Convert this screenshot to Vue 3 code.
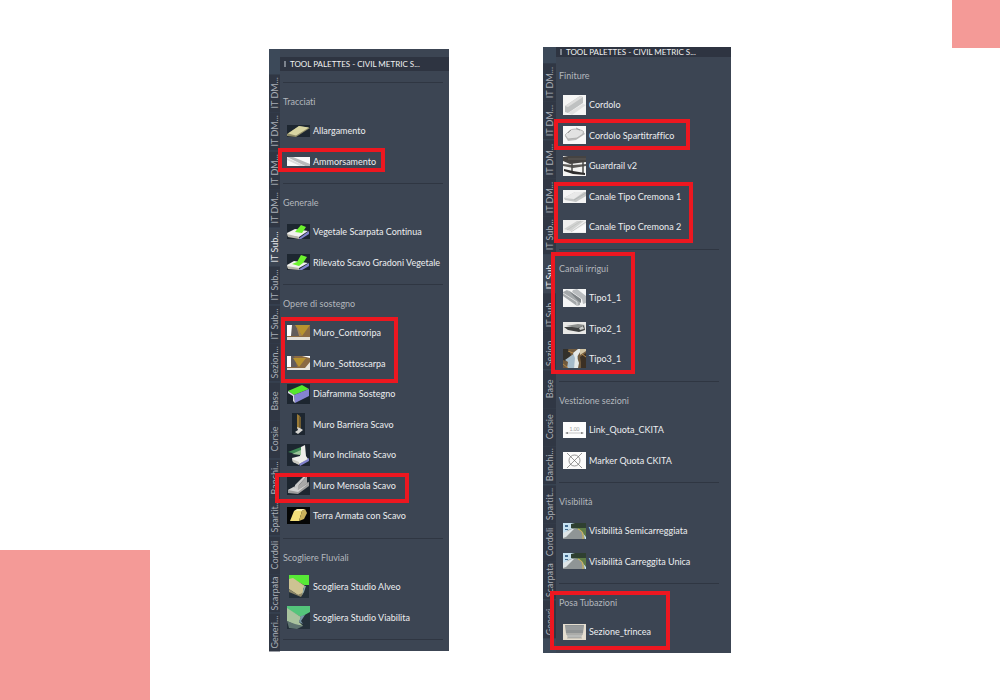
<template>
  <main class="slide">
    <div class="accent accent-top"></div>
    <div class="accent accent-bottom"></div>

    <section v-for="panel in panels" :key="panel.id" class="palette" :class="'palette-' + panel.id">
      <nav class="tabs" aria-label="Tool palettes">
        <button
          v-for="(tab, i) in tabs"
          :key="i"
          type="button"
          class="tab"
          :class="{ active: i === panel.activeTab }"
        >{{ tab }}</button>
      </nav>

      <div class="content">
        <header class="title-bar">
          <span class="grip"></span>
          <h2 class="title">TOOL PALETTES - CIVIL METRIC S...</h2>
        </header>

        <div class="groups">
          <div v-for="group in panel.groups" :key="group.name" class="group">
            <h3 class="group-name">{{ group.name }}</h3>
            <ul class="items">
              <li v-for="item in group.items" :key="item.label">
                <button type="button" class="item">
                  <span class="icon-cell">
                    <svg
                      :width="icons[item.icon].w || 23"
                      :height="icons[item.icon].h"
                      :viewBox="`0 0 ${icons[item.icon].w || 23} ${icons[item.icon].h}`"
                      aria-hidden="true"
                    >
                      <rect width="23" height="23" :fill="icons[item.icon].bg" />
                      <path
                        v-for="(p, n) in icons[item.icon].paths"
                        :key="n"
                        :d="p[1]"
                        :fill="p[0]"
                        :stroke="p[2] || 'none'"
                        :stroke-width="p[3] || 1"
                      />
                      <text v-if="icons[item.icon].text" x="11.5" y="8.5" class="icon-text">{{ icons[item.icon].text }}</text>
                    </svg>
                  </span>
                  <span class="item-label">{{ item.label }}</span>
                </button>
              </li>
            </ul>
          </div>
        </div>
      </div>

      <span
        v-for="(m, i) in panel.marks"
        :key="i"
        class="mark"
        :style="{ left: m.x + 'px', top: m.y + 'px', width: m.w + 'px', height: m.h + 'px' }"
      ></span>
    </section>
  </main>
</template>

<script setup>
const tabs = [
  'IT DM...', 'IT DM...', 'IT DM...', 'IT DM...', 'IT Sub...', 'IT Sub...', 'IT Sub...',
  'Sezion...', 'Base', 'Corsie', 'Banchi...', 'Spartit...', 'Cordoli', 'Scarpata', 'Generi...'
];

const dark = '#1d2630';

// paths: [fill, d, stroke, stroke width]
const icons = {
  allargamento: { h: 12, bg: dark, paths: [
    ['#8f8c68', 'M0 9 L12 1 L23 3 L9 12 L0 11Z'],
    ['#d8d5a2', 'M1 8.5 L12 1 L22 2.5 L9 10.5Z']
  ] },
  ammorsamento: { h: 9, bg: '#fafafa', paths: [
    ['#b9babb', 'M0 0 L6 0 L23 7 L23 9 L18 9Z'],
    ['#dcdcdc', 'M0 1 L18 9 L13 9 L0 3Z']
  ] },
  vegetale: { h: 15, bg: dark, paths: [
    ['#8385cf', 'M11 15 L22 7 L22 10 L14 15Z'],
    ['#f1f1ee', 'M0 9 L8 5 L21 7 L12 13 L1 12Z'],
    ['#b7b5aa', 'M0 10 L12 13 L12 15 L1 13Z'],
    ['#6df22f', 'M8 8 L14 1 L19 3 L15 9Z']
  ] },
  rilevato: { h: 16, bg: dark, paths: [
    ['#8385cf', 'M11 16 L22 9 L22 12 L15 16Z'],
    ['#f1f1ee', 'M0 11 L7 7 L21 9 L12 14 L1 14Z'],
    ['#b7b5aa', 'M0 12 L12 14 L12 16 L1 15Z'],
    ['#6df22f', 'M5 10 L10 8 L14 1 L20 3 L16 9 L12 12Z']
  ] },
  controripa: { h: 15, bg: '#8b6a43', paths: [
    ['#ffffff', 'M0 0 L6 0 L5 11 L0 11Z'],
    ['#625c5b', 'M5 0 L9 0 L13 11 L4 11Z'],
    ['#b8932f', 'M8 0 L23 0 L15 11Z'],
    ['#a58353', 'M9 0 L15 11 L12 11Z'],
    ['#e3dfd8', 'M0 12 L23 12 L23 15 L0 15Z']
  ] },
  sottoscarpa: { h: 14, bg: '#8b6a43', paths: [
    ['#ffffff', 'M0 0 L4 0 L4 11 L0 11Z'],
    ['#625c5b', 'M4 0 L7 0 L10 11 L4 11Z'],
    ['#b8932f', 'M6 2 L19 2 L12 11Z'],
    ['#ffffff', 'M15 0 L23 0 L23 2Z'],
    ['#e8e4dd', 'M23 6 L23 14 L0 14 L0 12 L18 12Z']
  ] },
  diaframma: { h: 20, bg: dark, paths: [
    ['#56e62c', 'M1 7 L15 1 L22 5 L7 11Z'],
    ['#8583d2', 'M7 11 L22 5 L22 12 L8 19Z'],
    ['#dcdce4', 'M1 7 L7 11 L8 19 L6 17 L6 12 L1 9Z']
  ] },
  barriera: { w: 13, h: 22, bg: dark, paths: [
    ['#9a7a35', 'M5 1 L8 3 L8 15 L5 16Z'],
    ['#6e5b32', 'M7 3 L9 4 L9 15 L7 15Z'],
    ['#d5d4d0', 'M5 14 L8 15 L11 17 L6 21 L3 19 L6 17Z']
  ] },
  inclinato: { h: 22, bg: dark, paths: [
    ['#8181cd', 'M12 20 L22 14 L22 17 L13 22Z'],
    ['#eeeeea', 'M14 3 L18 1 L19 12 L21 15 L12 20 L6 18 L5 14 L13 12Z'],
    ['#3f8955', 'M1 8 L14 3 L14 11Z'],
    ['#9bc599', 'M5 10 L14 6 L14 11Z'],
    ['#c9c8c0', 'M5 15 L12 18 L12 21 L6 18Z']
  ] },
  mensola: { h: 20, bg: dark, paths: [
    ['#9c9c9c', 'M1 15 L8 11 L22 7 L22 11 L11 19 L1 18Z'],
    ['#c9c9c9', 'M8 10 L17 1 L20 1 L11 11 L11 15 L8 14Z'],
    ['#a8a8a8', 'M11 11 L20 1 L20 8 L11 15Z'],
    ['#d2d2d2', 'M1 15 L7 12 L11 15 L22 8 L11 17Z']
  ] },
  terra: { h: 17, bg: '#050606', paths: [
    ['#f3df7a', 'M7 4 L15 4 L12 14 L3 14Z'],
    ['#fbf1ae', 'M7 4 L10 2 L18 2 L15 4Z'],
    ['#c9b25c', 'M15 4 L18 2 L20 6 L17 12 L12 14Z']
  ] },
  alveo: { w: 20, h: 23, bg: '#24303a', paths: [
    ['#57e936', 'M0 0 L20 0 L20 10 L15 10 L4 4 L0 5Z'],
    ['#cdc392', 'M0 4 L4 3 L16 11 L14 14 L14 19 L9 20 L0 14Z'],
    ['#8d8868', 'M0 14 L9 20 L15 17 L12 22 L0 17Z'],
    ['#8ca8a6', 'M15 11 L17 11 L15 17 L13 20Z']
  ] },
  viabilita: { h: 23, bg: '#24303a', paths: [
    ['#54c57b', 'M0 0 L23 0 L23 6 L14 11 L0 3Z'],
    ['#a9c39e', 'M0 2 L14 11 L12 16 L16 20 L8 19 L0 15Z'],
    ['#5e7470', 'M0 15 L8 18 L16 20 L10 23 L2 22Z'],
    ['#7796a5', 'M14 10 L18 9 L14 15 L16 18 L12 16Z']
  ] },
  cordolo: { h: 20, bg: '#f6f6f5', paths: [
    ['#bfc1c1', 'M2 11 L17 1 L20 2 L20 8 L5 18 L2 17Z'],
    ['#dededd', 'M2 11 L17 1 L20 2 L5 12Z'],
    ['#e2e2e1', 'M5 18 L20 9 L23 10 L9 20Z']
  ] },
  spartitraffico: { h: 18, bg: '#f8f8f8', paths: [
    ['#bcbcbc', 'M2 10 L10 4 L19 4 L22 8 L13 14 L5 15Z'],
    ['#e2e2e2', 'M2 9 L6 5 Q8 3 12 3 L18 4 Q22 5 20 8 L14 12 L5 13Z', '#a5a5a5', 0.7],
    ['none', 'M5 7 L8 4 M13 2 L17 4', '#808080', 0.7]
  ] },
  guardrail: { h: 20, bg: '#f4f4f3', paths: [
    ['#454342', 'M0 1 L5 0 L23 0 L23 6 L7 8 L0 5Z'],
    ['#5c5a58', 'M0 8 L10 9 L23 8 L23 10 L10 12 L0 10Z'],
    ['none', 'M9 7 L9 16 M20 6 L20 18', '#4a4948', 1.5],
    ['#2e2d2d', 'M1 13 L10 15 L22 17 L22 19 L10 18 L1 15Z'],
    ['none', 'M5 3 L23 3', '#6b6763', 0.7]
  ] },
  cremona1: { h: 13, bg: '#f4f4f4', paths: [
    ['#c5c7c7', 'M1 8 L12 2 L23 2 L23 6 L13 12 L2 10Z'],
    ['#e9e9e9', 'M1 8 L12 2 L21 2 L11 9Z'],
    ['none', 'M11 10 L23 3', '#aaadad', 0.7]
  ] },
  cremona2: { h: 13, bg: '#efefee', paths: [
    ['#d1d2d1', 'M1 9 L14 1 L21 1 L8 11Z'],
    ['none', 'M4 10 L18 1 M8 12 L23 2', '#bcbfbc', 0.7],
    ['#fafafa', 'M9 12 L23 4 L23 12Z']
  ] },
  tipo1: { h: 18, bg: '#f4f5f5', paths: [
    ['#a4a8aa', 'M0 3 L4 1 L17 10 L17 16 L14 17 L0 7Z'],
    ['#7f8487', 'M5 1 L18 10 L18 14 L15 12Z'],
    ['#b9bcbe', 'M10 1 L14 0 L23 7 L23 14 L20 15 L19 10 L9 3Z'],
    ['none', 'M0 4 L14 13 L14 17', '#e8e9e9', 0.8]
  ] },
  tipo2: { h: 12, bg: '#e8e8e6', paths: [
    ['#3f4141', 'M1 5 L14 5 L21 3 L22 8 L16 10 L5 8Z'],
    ['#8b8e8c', 'M3 4 L15 2 L22 3 L15 6Z'],
    ['#c9cbc9', 'M16 6 L20 4 L21 7 L17 8Z']
  ] },
  tipo3: { h: 19, bg: '#715a3d', paths: [
    ['#32302b', 'M0 0 L5 0 L8 6 L3 12 L0 11Z'],
    ['#a5bbca', 'M2 11 L12 4 L15 8 L11 19 L4 19 L5 13Z'],
    ['#e5e9e8', 'M10 4 L15 0 L19 0 L14 8 L16 14 L15 19 L11 19 L12 9Z'],
    ['#d2c5a4', 'M17 0 L23 0 L23 2 L17 6Z'],
    ['#3b3024', 'M17 8 L23 4 L23 19 L18 19 L18 13Z'],
    ['none', 'M0 15 L5 19 M5 2 L10 4 M19 5 L23 8', '#b68a4a', 1]
  ] },
  link: { h: 16, bg: '#fdfdfd', text: '1.00', paths: [
    ['none', 'M3 11 L20 11', '#a2a2a2', 0.6],
    ['#777777', 'M2 11 L5 10 L5 12Z M21 11 L18 10 L18 12Z']
  ] },
  marker: { h: 17, bg: '#fbfbfb', paths: [
    ['none', 'M4 1 L19 16 M19 1 L4 16 M6 8.5 A5.5 5.5 0 1 0 17 8.5 A5.5 5.5 0 1 0 6 8.5', '#6b6b6b', 0.7]
  ] },
  visibilita: { h: 16, bg: '#c7e2f2', paths: [
    ['#2f4031', 'M8 1 L12 0 L23 0 L23 6 L14 6 L8 5Z'],
    ['#5f7c46', 'M8 5 L23 5 L23 14 L18 8Z'],
    ['#8f9596', 'M5 7 L11 5 L16 6 L20 9 L22 16 L0 16 L0 13Z'],
    ['#dfe6e8', 'M0 10 L9 6 L11 6 L3 14 L0 15Z'],
    ['none', 'M15 6 Q21 8 20 16', '#d8b94b', 1],
    ['#436c91', 'M2 2 L5 2 L5 4 L2 4Z M2 6 L5 6 L5 7 L2 7Z']
  ] },
  trincea: { h: 16, bg: '#e4ddcf', paths: [
    ['#8f9394', 'M2 1 L21 1 L20 9 L3 9Z'],
    ['none', 'M3 3 L20 3 M3 5 L20 5', '#b1b4b3', 0.6],
    ['#b8bab8', 'M3 9 L20 9 L18 14 L5 14Z'],
    ['none', 'M3 10 L20 10 M4 14 L19 14', '#8f8d86', 0.6]
  ] }
};

const panels = [
  {
    id: 'left',
    activeTab: 4,
    groups: [
      { name: 'Tracciati', items: [
        { label: 'Allargamento', icon: 'allargamento' },
        { label: 'Ammorsamento', icon: 'ammorsamento' }
      ] },
      { name: 'Generale', items: [
        { label: 'Vegetale Scarpata Continua', icon: 'vegetale' },
        { label: 'Rilevato Scavo Gradoni Vegetale', icon: 'rilevato' }
      ] },
      { name: 'Opere di sostegno', items: [
        { label: 'Muro_Controripa', icon: 'controripa' },
        { label: 'Muro_Sottoscarpa', icon: 'sottoscarpa' },
        { label: 'Diaframma Sostegno', icon: 'diaframma' },
        { label: 'Muro Barriera Scavo', icon: 'barriera' },
        { label: 'Muro Inclinato Scavo', icon: 'inclinato' },
        { label: 'Muro Mensola Scavo', icon: 'mensola' },
        { label: 'Terra Armata con Scavo', icon: 'terra' }
      ] },
      { name: 'Scogliere Fluviali', items: [
        { label: 'Scogliera Studio Alveo', icon: 'alveo' },
        { label: 'Scogliera Studio Viabilita', icon: 'viabilita' }
      ] }
    ],
    marks: [
      { x: 9, y: 99, w: 107, h: 24 },
      { x: 12, y: 268, w: 117, h: 66 },
      { x: 6, y: 424, w: 134, h: 30 }
    ]
  },
  {
    id: 'right',
    activeTab: 5,
    groups: [
      { name: 'Finiture', items: [
        { label: 'Cordolo', icon: 'cordolo' },
        { label: 'Cordolo Spartitraffico', icon: 'spartitraffico' },
        { label: 'Guardrail v2', icon: 'guardrail' },
        { label: 'Canale Tipo Cremona 1', icon: 'cremona1' },
        { label: 'Canale Tipo Cremona 2', icon: 'cremona2' }
      ] },
      { name: 'Canali irrigui', items: [
        { label: 'Tipo1_1', icon: 'tipo1' },
        { label: 'Tipo2_1', icon: 'tipo2' },
        { label: 'Tipo3_1', icon: 'tipo3' }
      ] },
      { name: 'Vestizione sezioni', items: [
        { label: 'Link_Quota_CKITA', icon: 'link' },
        { label: 'Marker Quota CKITA', icon: 'marker' }
      ] },
      { name: 'Visibilità', items: [
        { label: 'Visibilità Semicarreggiata', icon: 'visibilita' },
        { label: 'Visibilità Carreggita Unica', icon: 'visibilita' }
      ] },
      { name: 'Posa Tubazioni', items: [
        { label: 'Sezione_trincea', icon: 'trincea' }
      ] }
    ],
    marks: [
      { x: 11, y: 72, w: 136, h: 31 },
      { x: 11, y: 135, w: 139, h: 61 },
      { x: 8, y: 205, w: 84, h: 122 },
      { x: 7, y: 544, w: 120, h: 59 }
    ]
  }
];
</script>

<style>
body { background: #fff; }
</style>

<style scoped>
.slide {
  position: relative;
  display: flex;
  align-items: center;
  justify-content: center;
  gap: 9.4%;
  min-height: 100vh;
  overflow: hidden;
  font-family: Lato, "Open Sans", sans-serif;
  font-size: 9px;
  font-variant-ligatures: none;
}

.accent { position: absolute; background: #f49a97; }
.accent-top { top: 0; right: 0; width: 48px; height: 48px; }
.accent-bottom { bottom: 0; left: 0; width: 150px; height: 150px; }

.palette {
  position: relative;
  display: flex;
  box-sizing: border-box;
  background: #3c4553;
  white-space: nowrap;
}
.palette-left { width: 18%; }
.palette-right { width: 18.8%; }

button {
  margin: 0;
  padding: 0;
  border: 0;
  background: none;
  color: inherit;
  font: inherit;
  cursor: pointer;
}

/* Side tabs, read bottom to top */
.tabs {
  display: flex;
  flex-direction: column;
  flex: none;
  box-sizing: border-box;
  background: #3c4959;
}
.palette-left .tabs { width: 11px; padding-top: 25px; }
.palette-right .tabs { width: 13px; padding: 16px 0 15px; }

.tab {
  flex: 1 1 0;
  min-height: 0;
  width: 100%;
  display: flex;
  align-items: center;
  justify-content: center;
  writing-mode: vertical-rl;
  transform: rotate(180deg);
  background: #303744;
  color: #a9aeb6;
}
.tab.active { background: #3c4553; color: #e6e8ea; }

.content { flex: 1; min-width: 0; }
.palette-left .content { padding-top: 8px; }

.title-bar {
  display: flex;
  align-items: center;
  gap: 4px;
  height: 14px;
  padding-left: 4px;
  background: #2e3441;
}
.palette-right .title-bar { height: 10px; }

.grip { width: 2px; height: 6px; background: #7d838d; }

.title {
  margin: 0;
  font-size: 8px;
  font-weight: 400;
  line-height: 10px;
  color: #f0f1f2;
}

.groups { padding: 0 6px 0 3px; }
.palette-left .groups { padding-top: 11px; padding-bottom: 11px; }
.palette-right .groups { padding-right: 12px; }

.group {
  border-top: 1px solid #2f3642;
  padding: 9px 0 7px;
}
.palette-left .group:last-child { border-bottom: 1px solid #2f3642; }
.palette-right .group:first-child { border-top: 0; }
.palette-right .group:last-child { padding-bottom: 6px; }

.group-name {
  margin: 0 0 3px;
  font-size: 9px;
  font-weight: 400;
  line-height: 20px;
  color: #b3b7bd;
}

.items {
  display: grid;
  grid-auto-rows: 31px 30px;
  margin: 0;
  padding: 0;
  list-style: none;
}

.item {
  display: flex;
  align-items: center;
  gap: 3px;
  width: 100%;
  height: 100%;
  padding-left: 4px;
  text-align: left;
}

.icon-cell { display: flex; justify-content: center; flex: none; width: 23px; }
.icon-cell svg { display: block; }
.icon-text { font-size: 5px; fill: #999; text-anchor: middle; }

.item-label { color: #eceef0; }

.mark {
  position: absolute;
  box-sizing: border-box;
  border: 4px solid #ed1720;
  pointer-events: none;
}
</style>
